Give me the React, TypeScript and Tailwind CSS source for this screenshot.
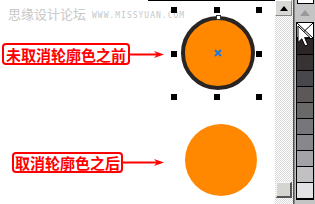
import React from "react";

const swatches = [
  "#2b2625",
  "#383333",
  "#48484c",
  "#5c5857",
  "#6b6868",
  "#77777b",
  "#88888c",
  "#a3a2a6",
  "#c2c0c3",
  "#e2e1e3",
];

function Handle() {
  return <div className="w-[6px] h-[6px] bg-black" />;
}

function Arrow({ w }: { w: number }) {
  return (
    <svg width={w} height={9} viewBox={`0 0 ${w} 9`}>
      <rect x={0} y={3.5} width={w - 4} height={2} fill="#ff0000" />
      <path d={`M${w - 10} 1 L${w} 4.5 L${w - 10} 8 L${w - 7} 4.5 Z`} fill="#ff0000" />
    </svg>
  );
}

function Label({ text, w, h, arrow }: { text: string; w: string; h: string; arrow: number }) {
  return (
    <div className="flex items-center">
      <div className={`${w} ${h} border-2 border-[#ff0000] rounded-[4px] flex items-center justify-center`}>
        <span className="text-[15px] leading-none font-bold text-[#ff0000]">{text}</span>
      </div>
      <Arrow w={arrow} />
    </div>
  );
}

export default function App() {
  const font = { fontFamily: '"Noto Sans CJK SC", "Liberation Sans", sans-serif' };
  return (
    <div className="flex w-[315px] h-[204px] overflow-hidden bg-white" style={font}>
      {/* canvas */}
      <div className="relative w-[275px] h-full bg-white">
        <div className="absolute left-[148px] top-0 w-[127px] h-px bg-black" />
        {/* watermark */}
        <div className="absolute left-[8px] top-[6px] flex items-end gap-[6px] text-[#c8c8c8]">
          <span className="text-[13px] leading-[16px]">思缘设计论坛</span>
          <span className="text-[8px] leading-[12px] tracking-[1px]" style={{ fontFamily: '"DejaVu Sans Mono", monospace' }}>
            WWW.MISSYUAN.COM
          </span>
        </div>

        {/* selected shape with outline */}
        <div className="absolute left-[171px] top-[7px] w-[91px] h-[93px]">
          <div className="absolute inset-0 flex flex-col justify-between">
            <div className="flex justify-between">
              <Handle />
              <Handle />
              <Handle />
            </div>
            <div className="flex justify-between">
              <Handle />
              <Handle />
            </div>
            <div className="flex justify-between">
              <Handle />
              <Handle />
              <Handle />
            </div>
          </div>
          <div className="absolute left-[10px] top-[9px] w-[74px] h-[74px] rounded-full bg-[#ff8800] border-[4px] border-[#2a2522] flex flex-col items-center">
            <div className="-mt-[5px] w-[5px] h-[5px] bg-white border border-[#333]" />
            <svg className="mt-[29px]" width={8} height={8} viewBox="0 0 8 8">
              <path d="M1 1 L7 7 M7 1 L1 7" stroke="#1a78e0" strokeWidth={2} />
            </svg>
          </div>
        </div>

        {/* circle without outline */}
        <div className="absolute left-[185px] top-[124px] w-[72px] h-[72px] rounded-full bg-[#ff8800]" />

        {/* labels */}
        <div className="absolute left-[2px] top-[43px]">
          <Label text="未取消轮廓色之前" w="w-[128px]" h="h-[22px]" arrow={34} />
        </div>
        <div className="absolute left-[12px] top-[152px]">
          <Label text="取消轮廓色之后" w="w-[111px]" h="h-[21px]" arrow={41} />
        </div>
      </div>

      {/* scrollbar */}
      <div
        className="w-[18px] h-full flex flex-col justify-between"
        style={{
          backgroundColor: "#f4f4f4",
          backgroundImage: "repeating-conic-gradient(#d8d8d8 0% 25%, #ffffff 0% 50%)",
          backgroundSize: "2px 2px",
        }}
      >
        <div className="h-[16px] w-[17px] bg-[#d8d8d4] border-t border-l border-white border-r border-b border-r-[#888] border-b-[#888] flex items-center justify-center">
          <svg width={8} height={5} viewBox="0 0 8 5">
            <path d="M0 5 L4 0 L8 5 Z" fill="#000" />
          </svg>
        </div>
        <div className="mb-[6px] ml-px h-[16px] w-[16px] bg-[#d4d4d0] border-t border-l border-[#f4f4f4] border-r-2 border-b-2 border-r-[#555] border-b-[#555]" />
      </div>
      <div className="w-px h-full bg-[#555]" />

      {/* palette */}
      <div className="relative flex-1 h-full bg-[#c4c4c4] border-l border-[#888] flex flex-col items-center">
        <div className="w-[17px] h-[4px] border-b border-x border-black bg-white" />
        <div className="h-[18px] flex items-center">
          <svg width={10} height={6} viewBox="0 0 10 6">
            <path d="M0 6 L5 0 L10 6 Z" fill="#999" />
          </svg>
        </div>
        <div className="w-[18px] flex flex-col border border-black">
          <div className="relative h-[16px] bg-white border-b border-black">
            <svg className="absolute inset-0" width={16} height={15} viewBox="0 0 16 15">
              <path d="M0 0 L16 15 M16 0 L0 15" stroke="#000" strokeWidth={1} />
            </svg>
          </div>
          {swatches.map((c, i) => (
            <div key={i} className="h-[16px] border-b border-black" style={{ backgroundColor: c }} />
          ))}
        </div>
        {/* cursor */}
        <svg className="absolute left-[2px] top-[25px]" width={14} height={23} viewBox="0 0 14 23">
          <path d="M1 1 L1 17.5 L4.8 13.8 L8 21 L10.8 19.8 L7.6 12.6 L13 12.6 Z" fill="#fff" stroke="#000" strokeWidth={1} />
        </svg>
      </div>
    </div>
  );
}
